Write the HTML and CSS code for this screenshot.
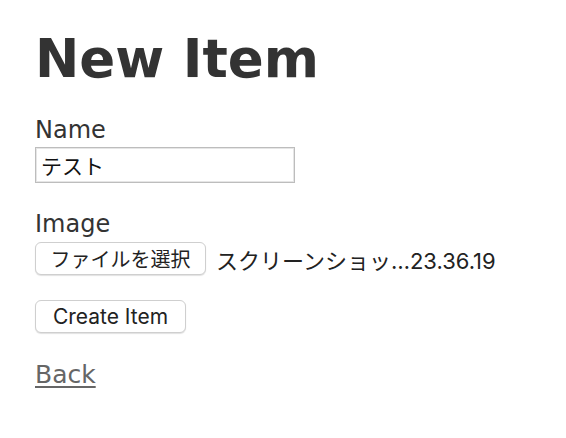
FILE: index.html
```html
<!DOCTYPE html>
<html lang="ja">
<head>
<meta charset="utf-8">
<title>New Item</title>
<link rel="stylesheet" href="styles.css">
</head>
<body>
<main class="page">
  <h1 class="title">New Item</h1>
  <form class="form">
    <div class="field">
      <label class="label" for="item_name">Name</label>
      <input class="text-input" id="item_name" type="text" value="テスト">
    </div>
    <div class="field field-image">
      <label class="label">Image</label>
      <div class="file-row">
        <span class="btn btn-file">ファイルを選択</span>
        <span class="file-name">スクリーンショッ…23.36.19</span>
      </div>
    </div>
    <div class="actions">
      <button class="btn btn-submit" type="button">Create Item</button>
    </div>
  </form>
  <a class="back" href="#">Back</a>
</main>
</body>
</html>
```
FILE: styles.css
```css
html, body {
  margin: 0;
  padding: 0;
  background: #fff;
}
body {
  color: #333;
  font-family: "DejaVu Sans", Verdana, sans-serif;
}
.page {
  padding: 32px 0 0 35px;
  display: flex;
  flex-direction: column;
  align-items: flex-start;
}
.title {
  margin: 0;
  font-size: 53px;
  line-height: 54px;
  font-weight: bold;
  color: #333;
}
.form {
  margin-top: 30px;
  display: flex;
  flex-direction: column;
  align-items: flex-start;
}
.field {
  display: flex;
  flex-direction: column;
  align-items: flex-start;
}
.label {
  font-size: 24px;
  line-height: 28px;
  height: 28px;
}
.text-input {
  margin: 3px 0 0 0;
  box-sizing: border-box;
  width: 260px;
  height: 36px;
  padding: 0 5px;
  border: 1px solid #bdbdbd;
  box-shadow: inset 0 0 0 1px #e6e6e6;
  font-family: "Noto Sans CJK JP", sans-serif;
  font-size: 21px;
  color: #111;
  background: #fff;
  outline: none;
}
.field-image {
  margin-top: 27px;
}
.file-row {
  margin-top: 4px;
  display: flex;
  align-items: center;
  gap: 10px;
}
.btn {
  box-sizing: border-box;
  display: inline-flex;
  align-items: center;
  justify-content: center;
  height: 33px;
  padding: 0;
  background: #fff;
  border: 1px solid #cfcfcf;
  border-radius: 6px;
  box-shadow: 0 1px 1px rgba(0,0,0,0.12);
  color: #222;
  font-family: Inter, "Noto Sans CJK JP", sans-serif;
  font-size: 20px;
  white-space: nowrap;
}
.btn-file {
  width: 171px;
  font-family: "Noto Sans CJK JP", sans-serif;
  font-size: 20px;
}
.file-name {
  font-family: Inter, "Noto Sans CJK JP", sans-serif;
  font-size: 22px;
  color: #222;
  white-space: nowrap;
}
.actions {
  margin-top: 25px;
}
.btn-submit {
  width: 151px;
  font-size: 21px;
}
.back {
  margin-top: 28px;
  font-size: 25px;
  line-height: 28px;
  color: #666;
  text-decoration: underline;
  text-underline-offset: 3px;
}
```
